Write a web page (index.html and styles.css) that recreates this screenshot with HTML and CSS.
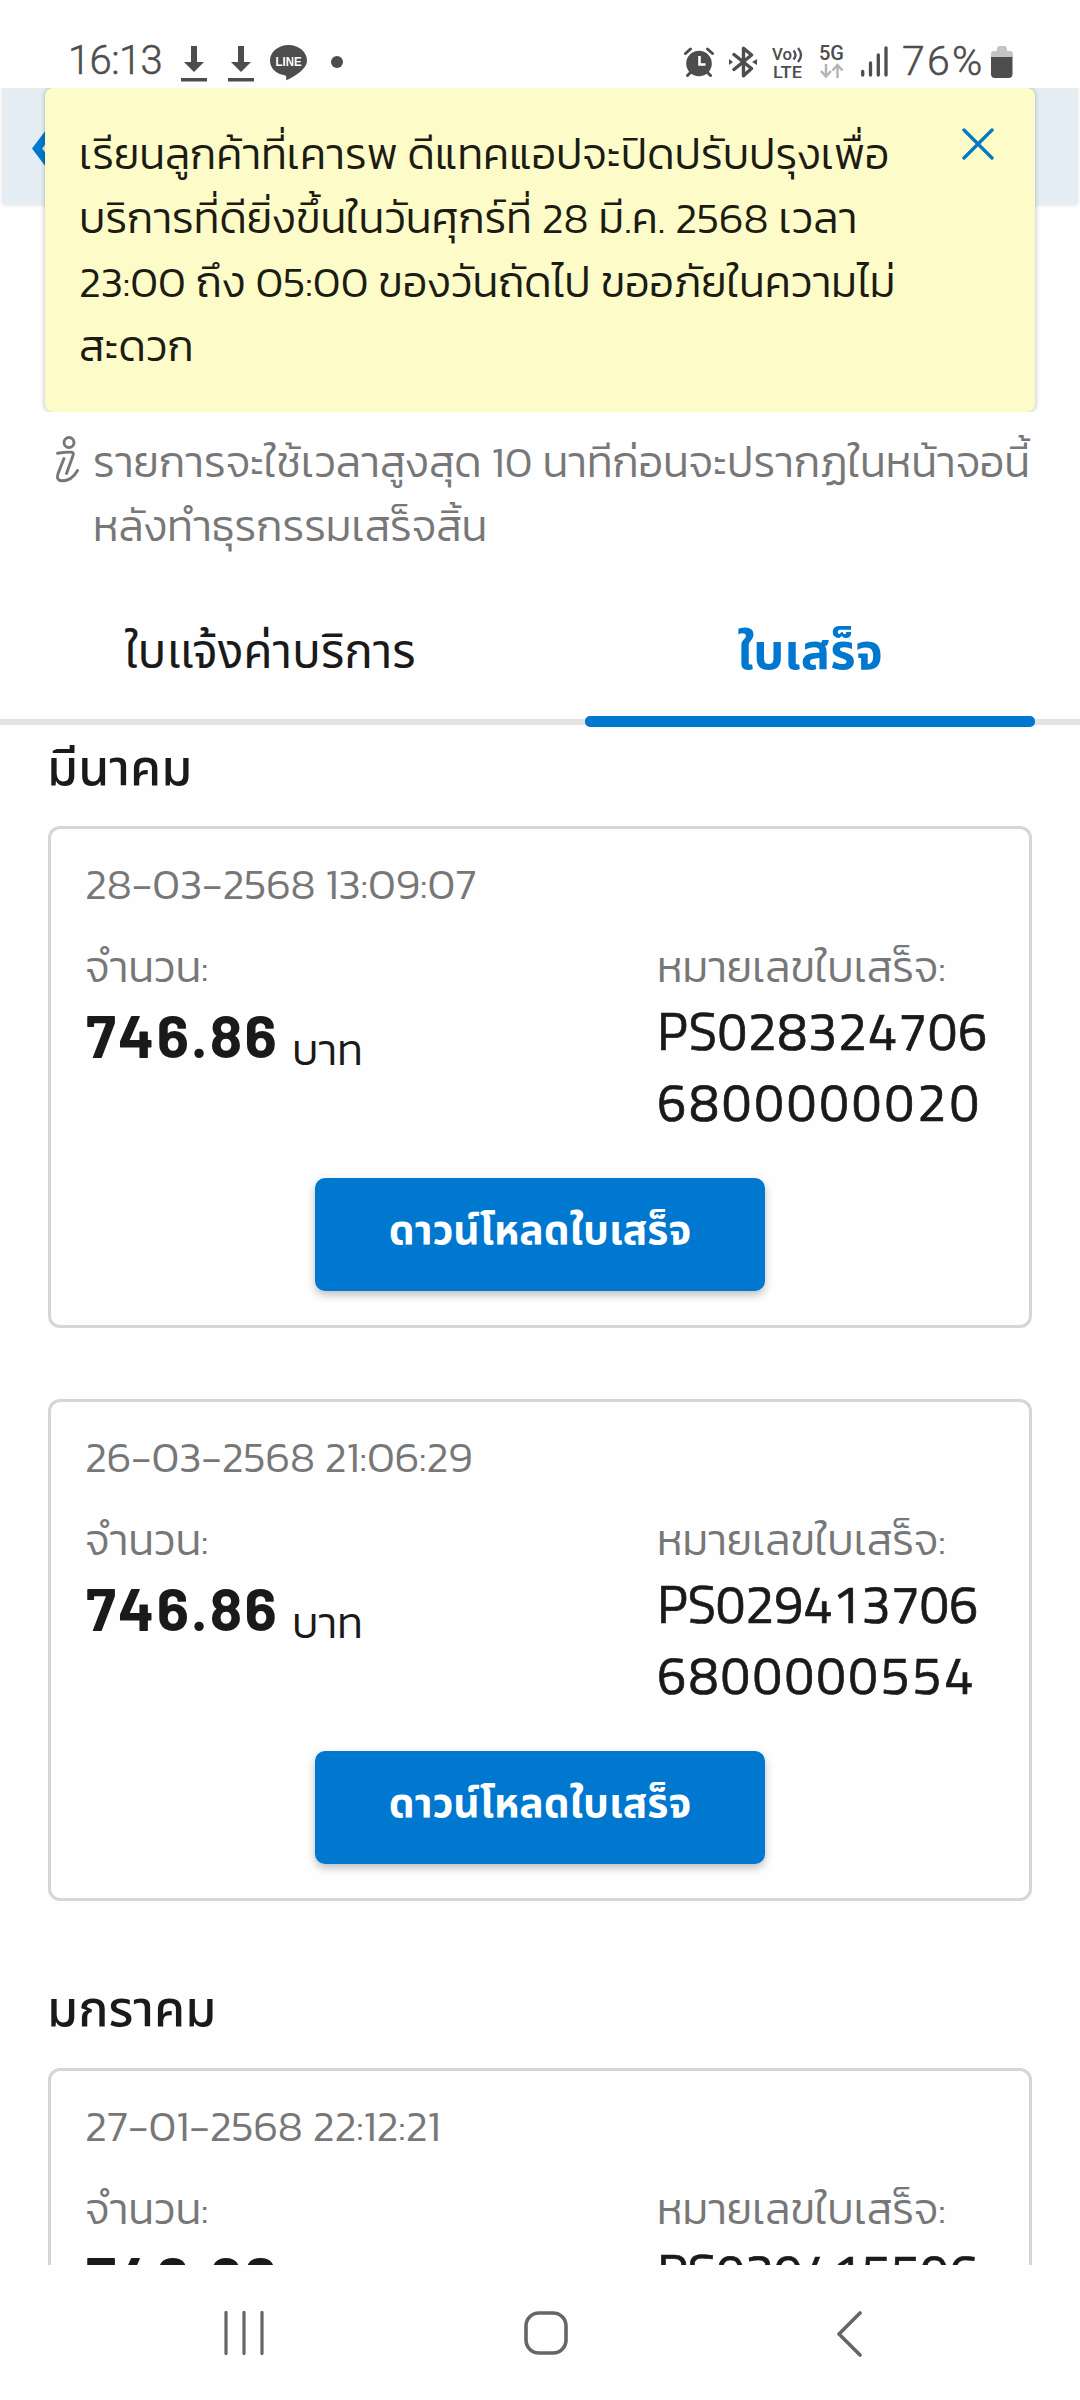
FILE: index.html
```html
<!DOCTYPE html>
<html lang="th">
<head>
<meta charset="utf-8">
<title>ใบเสร็จ</title>
<link rel="stylesheet" href="styles.css">
</head>
<body>
<div class="screen">
  <header class="status">
    <div class="status-left">
      <span class="time">16:13</span>
      <svg class="dl" width="26" height="36" viewBox="0 0 26 36"><path d="M10 0h6v16h7L13 26 3 16h7zM0 32h26v3.5H0z" fill="#4d4d4d"/></svg>
      <svg class="dl" width="26" height="36" viewBox="0 0 26 36"><path d="M10 0h6v16h7L13 26 3 16h7zM0 32h26v3.5H0z" fill="#4d4d4d"/></svg>
      <svg class="line-app" width="37" height="36" viewBox="0 0 37 36"><path d="M18.500 0C8.300 0 0 6.900 0 15.500 0 23 6 29 14.500 30.300c2 .5 2 1.500 1.600 5C22 33 37 25 37 15.500 37 6.900 28.700 0 18.500 0z" fill="#4d4d4d"/><text x="18.500" y="20.500" class="line-text" textLength="26" lengthAdjust="spacingAndGlyphs">LINE</text></svg>
      <span class="dot"></span>
    </div>
    <div class="status-right">
      <svg class="alarm" width="30" height="30" viewBox="0 0 30 30"><circle cx="15" cy="16.500" r="12.800" fill="#4d4d4d"/><path d="M1.500 6.500 6.500 2M28.500 6.500 23.500 2M3.500 28.500l4-4M26.500 28.500l-4-4" stroke="#4d4d4d" stroke-width="3" stroke-linecap="round"/><path d="M15.500 9v8.500h6" fill="none" stroke="#fff" stroke-width="2.600"/></svg>
      <svg class="bt" width="28" height="32" viewBox="0 0 28 32"><path d="M5 8.500 22.500 22.500 14.500 29.800V2.200L22.500 9 5 23.500" fill="none" stroke="#4d4d4d" stroke-width="3.400" stroke-linejoin="round" stroke-linecap="round"/><path d="M0 13l4 3-4 3zM28 13l-5 3 5 3z" fill="#4d4d4d"/></svg>
      <svg class="volte" width="32" height="40" viewBox="0 -4 32 40"><text x="0" y="14" class="net" textLength="20" lengthAdjust="spacingAndGlyphs">Vo</text><path d="M21.500 4.500q4 4.500 0 9M26 2q6 7 0 14" fill="none" stroke="#4d4d4d" stroke-width="2.300"/><text x="1" y="31.500" class="net" textLength="29" lengthAdjust="spacingAndGlyphs">LTE</text></svg>
      <svg class="five" width="26" height="40" viewBox="0 -6 26 40"><text x="0" y="15" class="net big" textLength="25" lengthAdjust="spacingAndGlyphs">5G</text><path d="M7 19v12M2 26l5 5.500 5-5.500M18.500 33V20.500M13.500 25.500l5-5.500 5 5.500" fill="none" stroke="#b3b3b3" stroke-width="2.400"/></svg>
      <svg class="bars" width="27" height="31" viewBox="0 0 27 31"><path d="M1.700 25.500v3.500M9.500 17v12M17.300 8.800V29M25 2v27" stroke="#4d4d4d" stroke-width="3.300" stroke-linecap="round"/></svg>
      <span class="pct">76%</span>
      <svg class="bat" width="22" height="32" viewBox="0 0 22 32"><path d="M0 12V8q0-3 3-3h3V3q0-3 3-3h4q3 0 3 3v2h3q3 0 3 3v4z" fill="#c4c4c4"/><path d="M0 11h21.500v17q0 4-4 4H4q-4 0-4-4z" fill="#4d4d4d"/></svg>
    </div>
  </header>

  <main class="app">
    <div class="topbar"><svg width="24" height="44" viewBox="0 0 24 44"><path d="M20 1 6 19.500 20 38" fill="none" stroke="#0078d0" stroke-width="8"/></svg></div>

    <div class="notice">
      <p class="notice-text"><span>เรียนลูกค้าที่เคารพ ดีแทคแอปจะปิดปรับปรุงเพื่อ</span><br><span>บริการที่ดียิ่งขึ้นในวันศุกร์ที่ 28 มี.ค. 2568 เวลา</span><br><span>23:00 ถึง 05:00 ของวันถัดไป ขออภัยในความไม่</span><br><span>สะดวก</span></p>
      <svg class="close" width="32" height="32" viewBox="0 0 32 32"><path d="M2 2 30 30M30 2 2 30" stroke="#0a78c0" stroke-width="3.400" stroke-linecap="round"/></svg>
    </div>

    <div class="info">
      <svg class="info-icon" width="24" height="48" viewBox="0 0 24 48"><g fill="none" stroke="#777" stroke-width="2.900" stroke-linecap="round" stroke-linejoin="round"><circle cx="13" cy="7.500" r="5"/><path d="M1.500 18.200Q10 17 15.500 17.200 18 17.500 17 20.500L10.500 38.500M8 23.500 2.800 36.500C.5 42 1 45.800 6 45.800 12 45.800 18 42 21.500 35.500"/></g></svg>
      <p class="info-text"><span>รายการจะใช้เวลาสูงสุด 10 นาทีก่อนจะปรากฏในหน้าจอนี้</span><br><span>หลังทำธุรกรรมเสร็จสิ้น</span></p>
    </div>

    <nav class="tabs">
      <div class="tab">ใบแจ้งค่าบริการ</div>
      <div class="tab active">ใบเสร็จ</div>
    </nav>

    <section class="month">
      <h2>มีนาคม</h2>
      <article class="card">
        <div class="date">28-03-2568 13:09:07</div>
        <div class="cols">
          <div class="col-amount"><div class="label">จำนวน:</div><div class="amount"><b>746.86</b><span class="unit">บาท</span></div></div>
          <div class="col-no"><div class="label">หมายเลขใบเสร็จ:</div><div class="no">PS028324706<br><span class="digits">6800000020</span></div></div>
        </div>
        <div class="btn">ดาวน์โหลดใบเสร็จ</div>
      </article>
      <article class="card">
        <div class="date">26-03-2568 21:06:29</div>
        <div class="cols">
          <div class="col-amount"><div class="label">จำนวน:</div><div class="amount"><b>746.86</b><span class="unit">บาท</span></div></div>
          <div class="col-no"><div class="label">หมายเลขใบเสร็จ:</div><div class="no tight">PS029413706<br><span class="digits">6800000554</span></div></div>
        </div>
        <div class="btn">ดาวน์โหลดใบเสร็จ</div>
      </article>
    </section>

    <section class="month">
      <h2>มกราคม</h2>
      <article class="card">
        <div class="date">27-01-2568 22:12:21</div>
        <div class="cols">
          <div class="col-amount"><div class="label">จำนวน:</div><div class="amount"><b>746.86</b></div></div>
          <div class="col-no"><div class="label">หมายเลขใบเสร็จ:</div><div class="no tight">PS029415506</div></div>
        </div>
      </article>
    </section>
  </main>

  <footer class="nav">
    <svg width="40" height="44" viewBox="0 0 40 44"><path d="M2 1.500v41M20 1.500v41M38 1.500v41" stroke="#666" stroke-width="3.200" stroke-linecap="round"/></svg>
    <svg class="home" width="44" height="44" viewBox="0 0 44 44"><rect x="2" y="2" width="40" height="40" rx="13" fill="none" stroke="#666" stroke-width="3.600"/></svg>
    <svg width="26" height="46" viewBox="0 0 26 46"><path d="M24 2 3 23 24 44" fill="none" stroke="#666" stroke-width="3.600" stroke-linecap="round" stroke-linejoin="round"/></svg>
  </footer>
</div>
</body>
</html>
```
FILE: styles.css
```css
* { box-sizing: border-box; margin: 0; padding: 0; }
svg { display: block; flex: none; }
body {
  background: #fefefe;
  color: #1a1a1a;
  font-family: Kanit, "Noto Sans Thai", "Noto Sans", sans-serif;
  font-weight: 300;
  font-size: 42.900px;
  line-height: 64px;
}
span, .tab, .btn, .no, .date, .label { white-space: nowrap; }
.screen { width: 1080px; height: 2400px; display: flex; flex-direction: column; overflow: hidden; }

.status { height: 88px; flex: none; display: flex; justify-content: space-between; padding: 0 67px 0 68px; color: #4d4d4d; font-family: Roboto, sans-serif; font-weight: 300; -webkit-text-stroke: 0.5px #4d4d4d; }
.status svg { -webkit-text-stroke: 0; }
.status-left, .status-right { display: flex; align-items: flex-start; }
.time, .pct { line-height: 48px; padding-top: 37px; }
.time { width: 113px; font-size: 40px; letter-spacing: -0.6px; }
.dl { margin: 46px 21px 0 0; }
.line-app { margin: 45px 24px 0 -5px; }
.line-text { font: 700 12px "Liberation Sans", sans-serif; fill: #fff; text-anchor: middle; }
.dot { width: 12px; height: 12px; border-radius: 50%; background: #4d4d4d; margin-top: 56px; }
.alarm { margin: 47px 15px 0 0; }
.bt { margin: 46px 15px 0 0; }
.volte { margin: 42px 15px 0 0; }
.five { margin: 39px 16px 0 0; }
.bars { margin: 46px 14px 0 0; }
.pct { width: 89px; font-size: 41px; letter-spacing: 2.300px; }
.bat { margin-top: 46px; }
.net { font: 500 17px/1 Roboto, sans-serif; fill: #4d4d4d; }
.net.big { font-size: 20px; }

.app { height: 2177px; flex: none; position: relative; overflow: hidden; }
.topbar { height: 116px; margin: 0 3px; padding: 41px 0 0 28px; background: #e6eef5; box-shadow: 0 0 4px rgba(0, 0, 0, .2); }

.notice { position: absolute; left: 45px; top: 0; width: 990px; height: 324px; padding: 34px 41px 0 34px; display: flex; justify-content: space-between; background: #fdfcc9; border-radius: 8px; box-shadow: 0 0 5px rgba(0, 0, 0, .3); clip-path: inset(0 -6px 0 -6px); color: #1c1c14; }
.notice-text { letter-spacing: 0.050px; }
.close { margin-top: 6px; }

.info { margin-top: 226px; padding: 0 48px 0 56px; display: flex; color: #777; }
.info-icon { margin: 5px 13px 0 0; }
.info-text { letter-spacing: 0.040px; }

.tabs { display: grid; grid-template-columns: 1fr 1fr; gap: 90px; margin-top: 64px; height: 103px; padding: 0 45px; border-bottom: 6px solid #e3e3e3; font-family: "Noto Sans Thai", "Noto Sans", sans-serif; font-weight: 450; font-size: 47.800px; text-align: center; }
.tab { height: 105px; }
.tab.active { color: #0078d0; font-weight: 700; font-size: 48.900px; display: flex; flex-direction: column; justify-content: space-between; }
.tab.active::after { content: ""; height: 11px; border-radius: 5px; background: #0078d0; }

.month { padding: 0 48px; margin-top: 13px; }
.month + .month { margin-top: 78px; }
h2 { font: 500 50px/64px "Noto Sans Thai", "Noto Sans", sans-serif; margin: 0 0 24px -1px; }
.card { border: 3px solid #d6d6d6; border-radius: 12px; padding: 23px 34px 34px; height: 502px; }
.card + .card { margin-top: 71px; }
.month + .month .card { margin-top: 25px; }
.date, .label { color: #777; }
.label { line-height: 56px; }
.cols { display: grid; grid-template-columns: 572px 1fr; margin-top: 23px; height: 198px; }
.amount { display: flex; align-items: flex-start; padding: 3px 0 0 1px; }
.amount b { font: 700 60px/73px Barlow, "Noto Sans", sans-serif; letter-spacing: 2.300px; }
.unit { margin: 20px 0 0 13px; }
.no { font: 400 52px/71px "Titillium Web", "Noto Sans", sans-serif; letter-spacing: 0.900px; -webkit-text-stroke: 0.7px #1a1a1a; }
.no .digits { letter-spacing: 3.400px; }
.no.tight { letter-spacing: 0; }
.no.tight .digits { letter-spacing: 2.800px; }
.btn { width: 450px; height: 113px; margin: 41px auto 0; padding-top: 22px; border-radius: 10px; background: #0078d0; color: #fff; text-align: center; font-family: "Noto Sans Thai", "Noto Sans", sans-serif; font-weight: 700; font-size: 40.800px; box-shadow: 0 4px 9px rgba(0, 0, 0, .25); }

.nav { height: 135px; display: flex; align-items: flex-start; justify-content: space-between; padding: 46px 218px 0 224px; }
.home { margin-right: 8px; }
```
